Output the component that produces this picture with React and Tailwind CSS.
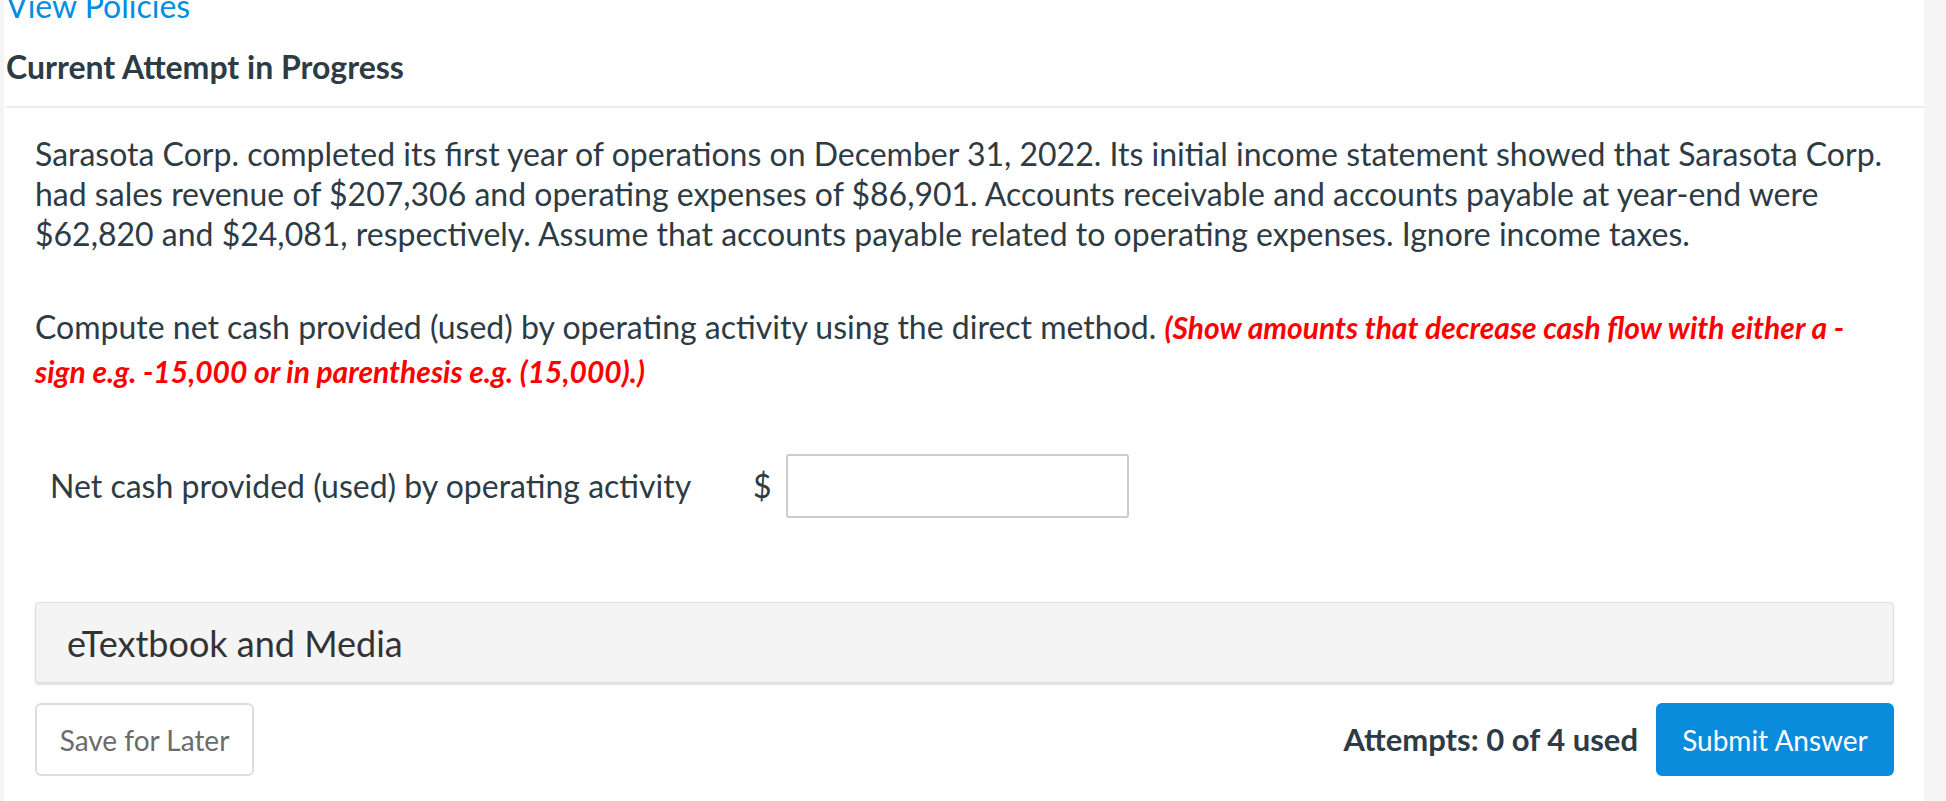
import React from 'react';

const lato = { fontFamily: 'Lato, "Open Sans", Arial, sans-serif' };

export default function App() {
  return (
    <div className="flex w-full h-[801px] overflow-hidden bg-white text-[#2d3b45]" style={lato}>
      <div className="w-[4px] shrink-0 bg-[#f4f4f4]" />

      <div className="flex-1 min-w-0 pl-[2px]">
        <a href="#" className="block mt-[-14px] text-[32px] leading-[40px] text-[#008ee2]">
          View Policies
        </a>
        <h2 className="mt-[21px] text-[32px] leading-[40px] font-bold">Current Attempt in Progress</h2>
        <div className="mt-[19px] h-[2px] bg-[#ececec]" />

        <div className="pl-[29px] pr-[30px]">
          <p className="mt-[26px] text-[32px] leading-[40px]">
            Sarasota Corp. completed its first year of operations on December 31, 2022. Its initial income
            statement showed that Sarasota Corp. had sales revenue of $207,306 and operating expenses of
            $86,901. Accounts receivable and accounts payable at year-end were $62,820 and $24,081,
            respectively. Assume that accounts payable related to operating expenses. Ignore income taxes.
          </p>

          <p className="mt-[51px] text-[32px] leading-[44px]">
            Compute net cash provided (used) by operating activity using the direct method.{' '}
            <span className="text-[30px] font-bold italic text-[#ff0000]">
              (Show amounts that decrease cash flow with either a - sign e.g. -15,000 or in parenthesis
              e.g. (15,000).)
            </span>
          </p>

          <div className="mt-[61px] flex items-center pl-[15px]">
            <div className="w-[703px] text-[32px] leading-[40px]">Net cash provided (used) by operating activity</div>
            <span className="w-[33px] text-[32px] leading-[40px]">$</span>
            <input
              type="text"
              className="w-[343px] h-[64px] border-2 border-[#cccccc] rounded-[3px] bg-white px-3 text-[28px] outline-none"
            />
          </div>

          <div className="mt-[84px] h-[81px] flex items-center pl-[31px] bg-[#f4f4f4] border border-[#dddddd] rounded-[4px] shadow-[0_2px_2px_rgba(0,0,0,0.12)]">
            <span className="text-[36px] text-[#333333]">eTextbook and Media</span>
          </div>

          <div className="mt-[20px] flex items-center">
            <button className="w-[219px] h-[73px] bg-white border-2 border-[#dddddd] rounded-[6px] text-[28px] text-[#6b6b6b]">
              Save for Later
            </button>
            <div className="flex-1" />
            <span className="text-[31px] font-bold mr-[18px]">Attempts: 0 of 4 used</span>
            <button className="w-[238px] h-[73px] bg-[#0b8bdc] rounded-[6px] text-[28px] text-white">
              Submit Answer
            </button>
          </div>
        </div>
      </div>

      <div className="w-[22px] shrink-0 bg-[#f5f5f5]" />
    </div>
  );
}
